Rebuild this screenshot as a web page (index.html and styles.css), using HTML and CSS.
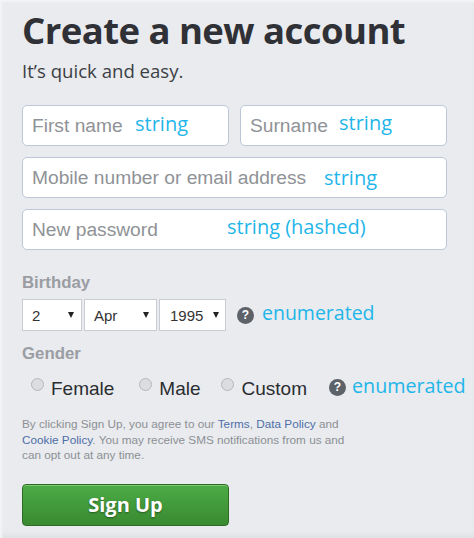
FILE: index.html
```html
<!DOCTYPE html>
<html lang="en">
<head>
<meta charset="utf-8">
<title>Create a new account</title>
<link rel="stylesheet" href="styles.css">
</head>
<body>
<main class="page">
  <h1 class="title">Create a new account</h1>
  <p class="subtitle">It’s quick and easy.</p>
  <div class="fields">
    <div class="name-row">
      <div class="field"><span class="ph">First name</span><span class="note note-first">string</span></div>
      <div class="field"><span class="ph">Surname</span><span class="note note-surname">string</span></div>
    </div>
    <div class="field"><span class="ph">Mobile number or email address</span><span class="note note-mobile">string</span></div>
    <div class="field"><span class="ph">New password</span><span class="note note-password">string (hashed)</span></div>
  </div>
  <div class="label label-birthday">Birthday</div>
  <div class="birthday-row">
    <div class="select sel-day"><span>2</span><i class="caret"></i></div>
    <div class="select sel-month"><span>Apr</span><i class="caret"></i></div>
    <div class="select sel-year"><span>1995</span><i class="caret"></i></div>
    <span class="help help-birthday">?</span>
    <span class="note-inline">enumerated</span>
  </div>
  <div class="label label-gender">Gender</div>
  <div class="gender-row">
    <span class="radio radio-female"></span><span class="gender gender-female">Female</span>
    <span class="radio radio-male"></span><span class="gender gender-male">Male</span>
    <span class="radio radio-custom"></span><span class="gender gender-custom">Custom</span>
    <span class="help help-gender">?</span>
    <span class="note-inline note-gender">enumerated</span>
  </div>
  <p class="legal">By clicking Sign Up, you agree to our <a>Terms</a>, <a>Data Policy</a> and <a>Cookie Policy</a>. You may receive SMS notifications from us and can opt out at any time.</p>
  <button class="signup" type="button">Sign Up</button>
</main>
</body>
</html>
```
FILE: styles.css
```css
html, body { margin: 0; padding: 0; }
body {
  width: 474px;
  height: 538px;
  overflow: hidden;
  background: #fff;
  font-family: "Liberation Sans", Arial, sans-serif;
}
.page {
  box-sizing: border-box;
  width: 474px;
  height: 538px;
  margin: 0;
  padding: 6px 0 0 22px;
  background: #e9ebee;
  box-shadow: inset 2px 2px 2px #f3f4f6, inset 0 -6px 5px -3px #dfe0e3;
}
.title {
  margin: 0;
  font-family: "Open Sans", sans-serif;
  font-weight: 700;
  font-size: 36.5px;
  letter-spacing: -.55px;
  line-height: 48px;
  color: #2f3136;
  white-space: nowrap;
}
.subtitle {
  margin: 4px 0 0;
  font-family: "Open Sans", sans-serif;
  font-size: 18.6px;
  line-height: 25px;
  color: #3c3f45;
}
.fields {
  display: flex;
  flex-direction: column;
  gap: 11px;
  width: 425px;
  margin-top: 22px;
}
.name-row { display: flex; gap: 11px; }
.name-row .field { flex: 1; }
.field {
  position: relative;
  box-sizing: border-box;
  height: 41px;
  padding: 0 9px;
  display: flex;
  align-items: center;
  background: #fff;
  border: 1.5px solid #bdc7d8;
  border-radius: 5px;
}
.ph { font-size: 19.2px; color: #8f9296; white-space: nowrap; }
.note, .note-inline {
  font-family: "Open Sans", sans-serif;
  color: #1fb6ea;
  white-space: nowrap;
}
.note { position: absolute; font-size: 20px; line-height: 24px; top: 6px; }
.note-first { left: 112px; }
.note-surname { left: 98px; top: 5px; }
.note-mobile { left: 301px; top: 8px; }
.note-password { left: 204px; top: 5px; }
.label { font-size: 16.8px; font-weight: 700; color: #9a9da3; line-height: 20px; }
.label-birthday { margin-top: 23px; }
.birthday-row { display: flex; align-items: center; margin-top: 6px; height: 32px; }
.select {
  box-sizing: border-box;
  height: 32px;
  display: flex;
  align-items: center;
  justify-content: space-between;
  background: #fff;
  border: 1px solid #c9ccd2;
  font-size: 15px;
  color: #333;
}
.sel-day { width: 60px; padding: 0 7px 0 9px; margin-right: 2px; }
.sel-month { width: 73px; padding: 0 7px 0 9px; margin-right: 2px; }
.sel-year { width: 67px; padding: 0 6px 0 10px; }
.caret {
  width: 0;
  height: 0;
  border-left: 3.5px solid transparent;
  border-right: 3.5px solid transparent;
  border-top: 6px solid #222;
}
.help {
  width: 17px;
  height: 17px;
  border-radius: 50%;
  background: #5d6269;
  color: #fff;
  font-size: 12px;
  font-weight: 700;
  line-height: 17px;
  text-align: center;
  flex: none;
}
.help-birthday { margin-left: 11px; }
.note-inline { font-size: 19.5px; line-height: 24px; margin-left: 8px; margin-top: -5px; }
.label-gender { margin-top: 13px; }
.gender-row { display: flex; align-items: center; height: 26px; margin-top: 11px; }
.radio {
  box-sizing: border-box;
  width: 13px;
  height: 13px;
  border-radius: 50%;
  border: 1px solid #b4b6ba;
  background: #dcdde0;
  flex: none;
  margin-top: -7px;
}
.radio-female { margin-left: 9px; }
.gender { font-size: 19px; color: #2b2d31; white-space: nowrap; margin-top: 2px; }
.gender-female { margin-left: 7px; }
.radio-male { margin-left: 25px; }
.gender-male { margin-left: 7px; }
.radio-custom { margin-left: 20px; }
.gender-custom { margin-left: 8px; }
.help-gender { margin-left: 22px; margin-top: -2px; }
.note-gender { margin-left: 6px; font-size: 19.7px; margin-top: -5px; }
.legal {
  width: 330px;
  margin: 15px 0 0;
  font-size: 11.75px;
  line-height: 15.6px;
  color: #8c8f95;
}
.legal a { color: #4d6ea8; }
.signup {
  display: block;
  box-sizing: border-box;
  width: 207px;
  height: 42px;
  margin-top: 21px;
  padding: 0;
  border: 1px solid #2f6b24;
  border-radius: 4px;
  background: linear-gradient(#4cab46, #398a30);
  box-shadow: inset 0 1px 0 #7ccb72;
  font-family: "Open Sans", sans-serif;
  font-weight: 700;
  font-size: 20px;
  color: #fff;
  text-shadow: 0 1px 2px rgba(0, 0, 0, .4);
}
```
